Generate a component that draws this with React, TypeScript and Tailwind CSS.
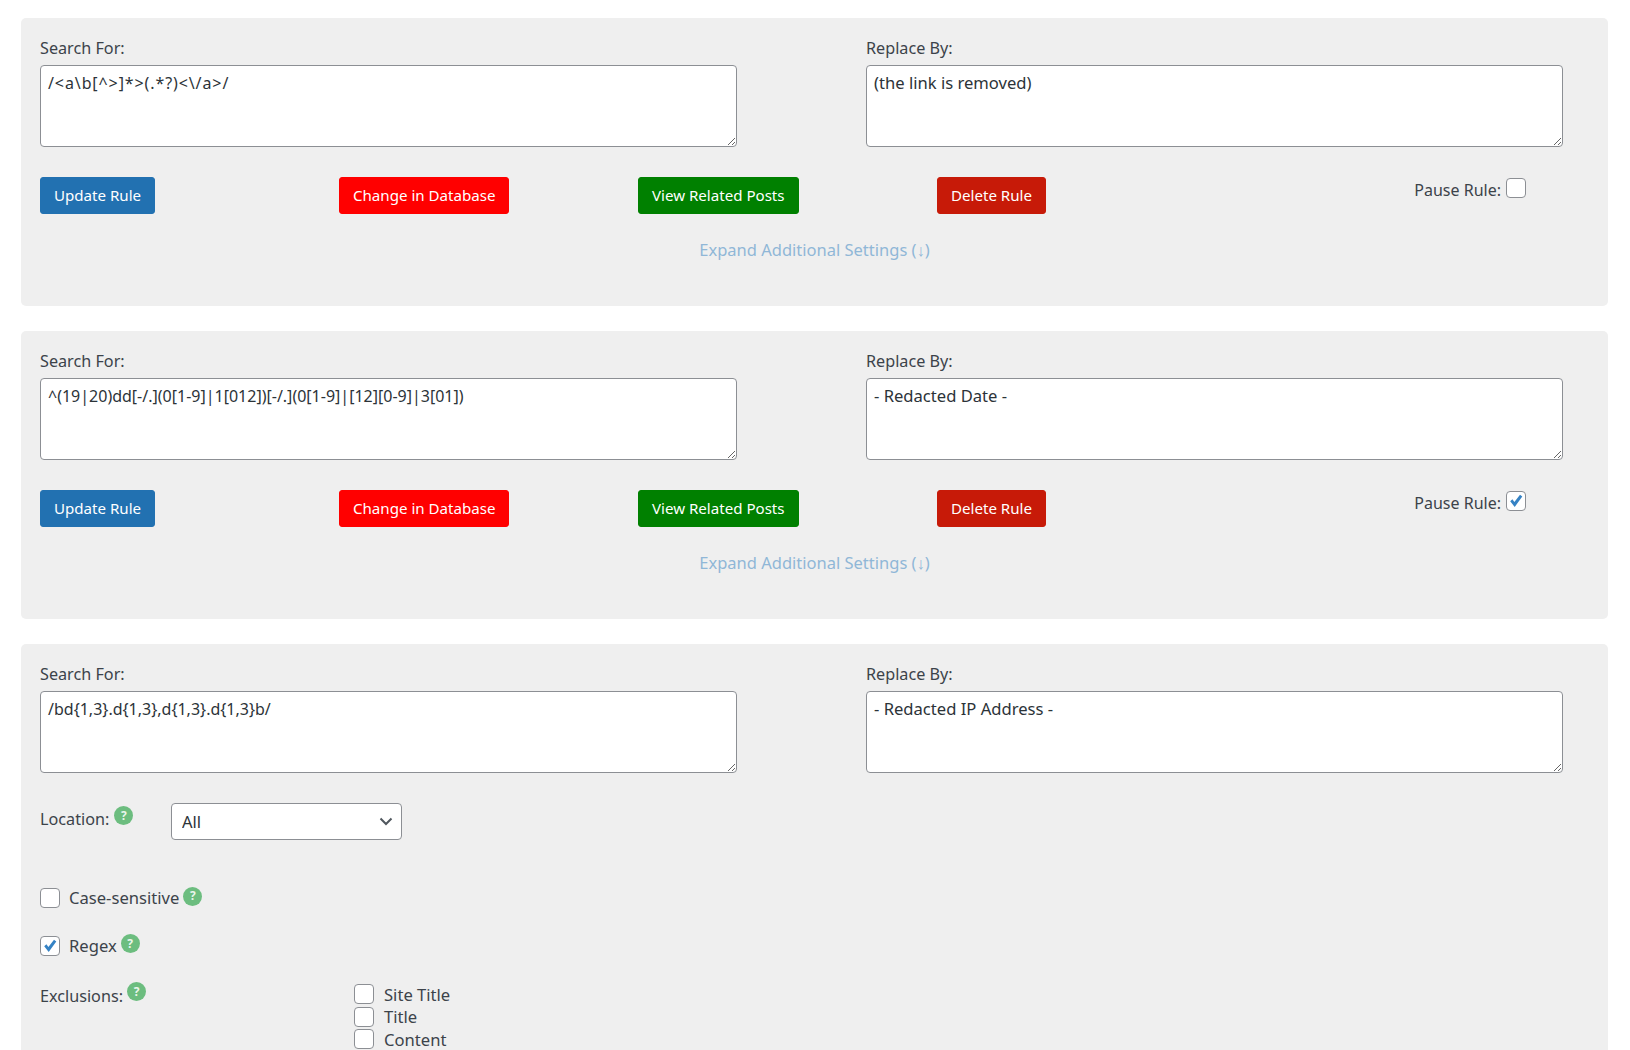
import React from "react";

const font = "font-['Noto_Sans','Open_Sans',sans-serif]";

function Help({ className = "" }: { className?: string }) {
  return (
    <span className={`inline-flex h-[19px] w-[19px] items-center justify-center rounded-full bg-[#6cbd7f] text-[12px] font-bold leading-none text-[#eaf5ec] ${className}`}>
      ?
    </span>
  );
}

function Check({ checked = false, className = "" }: { checked?: boolean; className?: string }) {
  return (
    <span className={`relative inline-block h-[20px] w-[20px] shrink-0 ${className}`}>
      <input
        type="checkbox"
        defaultChecked={checked}
        className="block h-[20px] w-[20px] appearance-none rounded-[4px] border border-[#8c8f94] bg-white"
      />
      {checked && (
        <svg viewBox="0 0 20 20" className="pointer-events-none absolute left-0 top-0 h-[20px] w-[20px]">
          <path d="M4.2 10.2 L6.4 8.2 L8.4 11 L14 3.8 L16.3 5.6 L8.7 16 Z" fill="#3582c4" />
        </svg>
      )}
    </span>
  );
}

function Field({ label, value, size }: { label: string; value: string; size: string }) {
  return (
    <div className="w-[697px]">
      <label className="block h-[30px] pt-[2px] text-[16.2px] leading-[22px]">{label}</label>
      <textarea
        defaultValue={value}
        className={`block h-[82px] w-[697px] rounded-[4px] border border-[#8c8f94] bg-white px-[7px] py-[3px] leading-[28px] text-[#2c3338] outline-none ${size}`}
      />
    </div>
  );
}

function Btn({ text, color, border }: { text: string; color: string; border: string }) {
  return (
    <button className={`h-[37px] justify-self-start rounded-[3px] border px-[13px] text-[15.1px] leading-[35px] text-white ${color} ${border}`}>
      {text}
    </button>
  );
}

function Fields({ search, replace, searchSize }: { search: string; replace: string; searchSize: string }) {
  return (
    <div className="flex gap-[129px]">
      <Field label="Search For:" value={search} size={searchSize} />
      <Field label="Replace By:" value={replace} size="text-[16.6px]" />
    </div>
  );
}

function Panel({ search, replace, paused, searchSize }: { search: string; replace: string; paused: boolean; searchSize: string }) {
  return (
    <section className="mb-[25px] h-[288px] rounded-[5px] bg-[#efefef] px-[19px] pt-[17px]">
      <Fields search={search} replace={replace} searchSize={searchSize} />
      <div className="mt-[30px] grid grid-cols-[299px_299px_299px_299px_1fr]">
        <Btn text="Update Rule" color="bg-[#2271b1]" border="border-[#2271b1]" />
        <Btn text="Change in Database" color="bg-[#ff0000]" border="border-[#ff0000]" />
        <Btn text="View Related Posts" color="bg-[#008000]" border="border-[#008000]" />
        <Btn text="Delete Rule" color="bg-[#c71a08]" border="border-[#c71a08]" />
        <div className="flex items-start justify-end pr-[63px] pt-px">
          <span className="mr-[5px] text-[16px] leading-[24px]">Pause Rule:</span>
          <Check checked={paused} />
        </div>
      </div>
      <div className="mt-[24px] text-center text-[16.5px] leading-[24px] text-[#90b7d7]">
        Expand Additional Settings (↓)
      </div>
    </section>
  );
}

export default function App() {
  return (
    <div className={`h-[1050px] overflow-hidden bg-white px-[21px] pt-[18px] pr-[22px] text-[#3c434a] ${font}`}>
      <Panel search={"/<a\\b[^>]*>(.*?)<\\/a>/"} replace="(the link is removed)" paused={false} searchSize="text-[16px] tracking-[0.9px]" />
      <Panel search={"^(19|20)dd[-/.](0[1-9]|1[012])[-/.](0[1-9]|[12][0-9]|3[01])"} replace="- Redacted Date -" paused={true} searchSize="text-[16px]" />
      <section className="h-[420px] rounded-[5px] bg-[#efefef] px-[19px] pt-[17px]">
        <Fields search={"/bd{1,3}.d{1,3},d{1,3}.d{1,3}b/"} replace="- Redacted IP Address -" searchSize="text-[16px]" />
        <div className="mt-[30px] flex h-[37px] items-start">
          <div className="flex w-[131px] items-start">
            <span className="mr-[5px] pt-[4px] text-[16.2px] leading-[24px]">Location:</span>
            <Help className="mt-[3px]" />
          </div>
          <div className="relative w-[231px]">
            <select className="h-[37px] w-[231px] appearance-none rounded-[4px] border border-[#8c8f94] bg-white px-[10px] pt-[2px] text-[16.5px] text-[#2c3338] outline-none">
              <option>All</option>
            </select>
            <svg viewBox="0 0 16 16" className="pointer-events-none absolute right-[8px] top-[10px] h-[16px] w-[16px]" fill="none" stroke="#50575e" strokeWidth="2">
              <path d="M2.5 5.5 L8 11 L13.5 5.5" />
            </svg>
          </div>
        </div>
        <div className="mt-[48px] flex h-[20px] items-center">
          <Check />
          <span className="ml-[9px] text-[16.6px] leading-[24px]">Case-sensitive</span>
          <Help className="ml-[4px] -mt-[4px]" />
        </div>
        <div className="mt-[28px] flex h-[20px] items-center">
          <Check checked />
          <span className="ml-[9px] text-[16.6px] leading-[24px]">Regex</span>
          <Help className="ml-[4px] -mt-[5px]" />
        </div>
        <div className="mt-[28px] flex items-start">
          <div className="flex w-[314px] items-start">
            <span className="mr-[4px] text-[16.2px] leading-[24px]">Exclusions:</span>
            <Help className="-mt-[2px]" />
          </div>
          <div className="flex flex-col gap-[2.5px]">
            {["Site Title", "Title", "Content"].map((t) => (
              <div key={t} className="flex h-[20px] items-center">
                <Check />
                <span className="ml-[10px] pt-[1px] text-[16.6px] leading-[20px]">{t}</span>
              </div>
            ))}
          </div>
        </div>
      </section>
    </div>
  );
}
